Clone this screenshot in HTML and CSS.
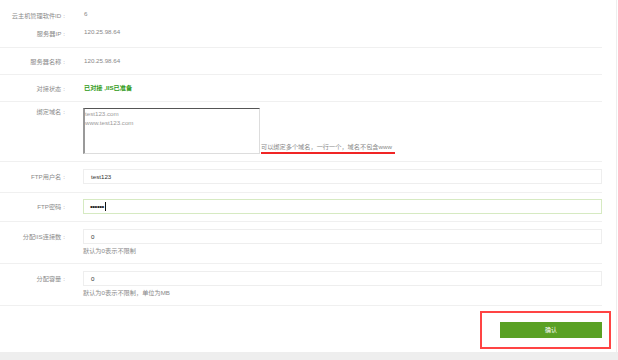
FILE: index.html
```html
<!DOCTYPE html>
<html>
<head>
<meta charset="utf-8" />
<title>绑定站点</title>
<link rel="stylesheet" href="styles.css">
</head>
<body>
<div class="main">
  <div class="form">
    <div class="group first">
      <div class="row">
        <span class="lab">云主机管理软件ID<em>:</em></span>
        <span class="val">6</span>
      </div>
      <div class="row">
        <span class="lab">服务器IP<em>:</em></span>
        <span class="val">120.25.98.64</span>
      </div>
    </div>
    <div class="group info">
      <div class="row">
        <span class="lab">服务器名称<em>:</em></span>
        <span class="val">120.25.98.64</span>
      </div>
    </div>
    <div class="group info">
      <div class="row">
        <span class="lab">对接状态<em>:</em></span>
        <span class="val ok">已对接 ,IIS已准备</span>
      </div>
    </div>
    <div class="group domain">
      <div class="row">
        <span class="lab">绑定域名<em>:</em></span>
        <div class="box">
          <div class="area">test123.com<br />www.test123.com</div>
          <span class="tip red">可以绑定多个域名，一行一个，域名不包含www</span>
        </div>
      </div>
    </div>
    <div class="group field user">
      <div class="row">
        <span class="lab">FTP用户名<em>:</em></span>
        <div class="box"><div class="inp">test123</div></div>
      </div>
    </div>
    <div class="group field pass">
      <div class="row">
        <span class="lab">FTP密码<em>:</em></span>
        <div class="box"><div class="inp-on"><span class="dots">••••••</span><span class="caret"></span></div></div>
      </div>
    </div>
    <div class="group field more">
      <div class="row">
        <span class="lab">分配IIS连接数<em>:</em></span>
        <div class="box col">
          <div class="inp">0</div>
          <span class="note">默认为0表示不限制</span>
        </div>
      </div>
    </div>
    <div class="group field more">
      <div class="row">
        <span class="lab">分配容量<em>:</em></span>
        <div class="box col">
          <div class="inp">0</div>
          <span class="note">默认为0表示不限制，单位为MB</span>
        </div>
      </div>
    </div>
  </div>
  <div class="foot">
    <div class="mark">
      <a class="btn">确认</a>
    </div>
  </div>
</div>
<div class="bottom"></div>
</body>
</html>
```

FILE: styles.css
```css
*{margin:0;padding:0;box-sizing:border-box;}
body{font-family:"Liberation Sans","Noto Sans CJK SC",sans-serif;font-size:6.2px;color:#888;background:#fff;width:618px;height:360px;overflow:hidden;}
.main{width:617px;height:352px;border-right:1px solid #eee;}
.form{width:602px;}
.group{border-bottom:1px solid #f0f0f0;}
.row{display:flex;align-items:flex-start;}
.lab{width:65px;flex:none;text-align:right;color:#8a8a8a;}
.lab em{font-style:normal;margin-left:2px;}
.val{margin-left:19px;color:#888;}
.first{padding:6px 0 5px;}
.first .row{height:18px;align-items:center;}
.first .val{margin-top:-3px;}
.info .row{height:26px;align-items:center;}
.info .val{margin-top:-2px;}
.ok{color:#2f9a17;font-weight:bold;}
.domain{height:60px;padding-top:5px;}
.box{margin-left:18px;flex:1;display:flex;align-items:flex-end;}
.col{flex-direction:column;align-items:stretch;}
.area{width:177px;height:46px;margin-top:1px;border:1px solid #ddd;border-top-color:#555;border-left:2px solid #999;color:#9a9a9a;line-height:9px;padding:0;}
.tip{margin-left:1px;color:#888;padding-bottom:1px;line-height:8px;font-size:6.2px;}
.red{border-bottom:2px solid #f02525;padding-right:3px;}
.field{padding-top:7px;}
.field .lab{line-height:15px;}
.inp{flex:1;height:15px;border:1px solid #eee;padding-left:7px;color:#333;display:flex;align-items:center;}
.inp-on{flex:1;height:15px;padding-left:7px;color:#333;display:flex;align-items:center;border:0;box-shadow:inset 0 0 0 1px #d6eac2;background:#fff;}
.col .inp{flex:none;}
.dots{font-size:8px;letter-spacing:-0.5px;color:#222;}
.caret{display:block;width:1px;height:9px;background:#111;margin-left:1px;}
.user{height:31px;}
.pass{height:29px;padding-top:6px;}
.more{height:42px;}
.note{display:block;margin-top:2px;line-height:10px;color:#888;}
.foot{display:flex;justify-content:flex-end;padding:5px 5px 0 0;}
.mark{width:131px;height:38px;border:2px solid #f44;display:flex;align-items:center;justify-content:flex-end;padding-right:7px;}
.btn{display:block;width:102px;height:16px;background:#5aa125;color:#fff;text-align:center;line-height:16px;font-size:6px;}
.bottom{height:8px;background:#eee;}
```
